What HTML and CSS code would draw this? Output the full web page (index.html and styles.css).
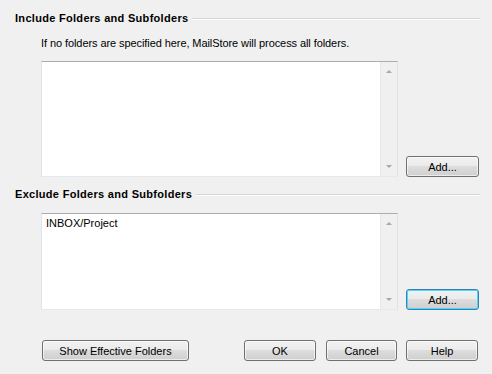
FILE: index.html
```html
<!DOCTYPE html>
<html>
<head>
<meta charset="utf-8">
<link rel="stylesheet" href="styles.css">
</head>
<body>
<div class="dialog">
  <div class="heading heading-first"><span>Include Folders and Subfolders</span><div class="rule"></div></div>
  <div class="hint">If no folders are specified here, MailStore will process all folders.</div>
  <div class="row">
    <div class="list list-include">
      <div class="items"></div>
      <div class="scrollbar"><span class="arrow up"></span><span class="arrow down"></span></div>
    </div>
    <button class="btn btn-add">Add...</button>
  </div>
  <div class="heading heading-second"><span>Exclude Folders and Subfolders</span><div class="rule"></div></div>
  <div class="row">
    <div class="list list-exclude">
      <div class="items"><div class="item">INBOX/Project</div></div>
      <div class="scrollbar"><span class="arrow up"></span><span class="arrow down"></span></div>
    </div>
    <button class="btn btn-add focused">Add...</button>
  </div>
  <div class="footer">
    <button class="btn btn-wide">Show Effective Folders</button>
    <div class="spacer"></div>
    <button class="btn btn-std btn-ok">OK</button>
    <button class="btn btn-std btn-cancel">Cancel</button>
    <button class="btn btn-std">Help</button>
  </div>
</div>
</body>
</html>
```
FILE: styles.css
```css
html, body {
  margin: 0;
  padding: 0;
  background: #f0f0f0;
}
body {
  font-family: "Liberation Sans", Arial, sans-serif;
  font-size: 11px;
  color: #000;
}
.dialog {
  width: 492px;
  height: 374px;
  box-sizing: border-box;
  padding: 0 12px 0 15px;
  display: flex;
  flex-direction: column;
}
.heading {
  display: flex;
  align-items: center;
  gap: 4px;
  font-weight: bold;
  height: 13px;
  line-height: 13px;
  letter-spacing: 0.3px;
}
.heading-first { margin-top: 12px; }
.heading-second { margin-top: 11px; }
.rule {
  flex: 1;
  height: 0;
  border-top: 1px solid #d5d5d5;
  border-bottom: 1px solid #ffffff;
}
.hint {
  margin-top: 12px;
  margin-left: 26px;
  height: 13px;
  line-height: 13px;
  letter-spacing: -0.08px;
}
.row {
  display: flex;
  align-items: flex-end;
  gap: 8px;
  margin-left: 26px;
}
.list-include { margin-top: 11px; height: 116px; }
.list-exclude { height: 97px; }
.heading-second + .row { margin-top: 12px; }
.list {
  width: 357px;
  box-sizing: border-box;
  background: #fff;
  border: 1px solid #e2e3ea;
  border-top-color: #abadb3;
  border-bottom-color: #e3e9ef;
  display: flex;
}
.items {
  flex: 1;
  padding: 3px 4px;
}
.item {
  line-height: 13px;
}
.scrollbar {
  width: 16px;
  background: #f0f0f0;
  border-left: 1px solid #e8e8e8;
  position: relative;
}
.arrow {
  position: absolute;
  left: 5px;
  width: 0;
  height: 0;
  border-left: 3px solid transparent;
  border-right: 3px solid transparent;
}
.arrow.up {
  top: 8px;
  border-bottom: 3px solid #a8a8a8;
}
.arrow.down {
  bottom: 8px;
  border-top: 3px solid #a8a8a8;
}
.btn {
  font-family: inherit;
  font-size: 11px;
  color: #000;
  height: 21px;
  box-sizing: border-box;
  padding: 0;
  border: 1px solid #707070;
  border-radius: 3px;
  background: linear-gradient(to bottom, #f2f2f2 0%, #ebebeb 45%, #dddddd 50%, #cfcfcf 100%);
  box-shadow: inset 0 0 0 1px rgba(255,255,255,0.6);
}
.btn-add { width: 73px; }
.btn.focused {
  border-color: #3c7fb1;
  box-shadow: inset 0 0 0 1px #48d8fb;
}
.footer {
  display: flex;
  align-items: center;
  margin-top: 30px;
  margin-left: 27px;
  margin-right: 2px;
  gap: 9px;
}
.btn-wide { width: 147px; }
.btn-std { width: 72px; }
.btn-ok { margin-right: 1px; }
.btn-cancel { width: 71px; }
.spacer { flex: 1; }
```
